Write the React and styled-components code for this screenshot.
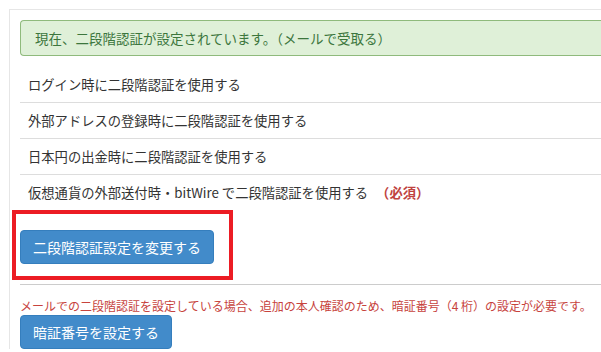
import styled, { createGlobalStyle } from 'styled-components';

const GlobalStyle = createGlobalStyle`
    html, body {
        margin: 0;
        padding: 0;
        background: #fff;
        overflow: hidden;
    }
    body {
        font-family: "Noto Sans CJK JP", "Noto Sans", sans-serif;
        color: #333;
    }
`;

const Page = styled.div`
    padding: 9px 0 0 9px;
`;

const Panel = styled.section`
    border-top: 1px solid #e6e6e6;
    border-left: 1px solid #e6e6e6;
    padding: 10px 0 0 10px;
`;

// the alert runs on past the right edge of the window, so no right border is seen
const Alert = styled.div`
    display: flex;
    align-items: center;
    height: 36px;
    box-sizing: border-box;
    padding: 0 14px;
    font-size: 13.5px;
    color: #3c763d;
    background-color: #dff0d8;
    border: 1px solid #8fba7c;
    border-right: none;
    border-radius: 4px 0 0 4px;
`;

const List = styled.ul`
    list-style: none;
    margin: 10px 0 0;
    padding: 0;
`;

const Row = styled.li`
    display: flex;
    align-items: center;
    height: 36px;
    box-sizing: border-box;
    padding-left: 8px;
    font-size: 13.3px;
    color: #333;
    border-top: ${p => (p.$first ? 'none' : '1px solid #dddddd')};
`;

const Required = styled.span`
    margin-left: 8px;
    color: #c0433f;
    font-weight: bold;
`;

const Action = styled.div`
    position: relative;
    padding: 20px 0 20px;
    border-bottom: 1px solid #cccccc;
`;

const Highlight = styled.div`
    position: absolute;
    left: -8px;
    top: 0;
    width: 221px;
    height: 70px;
    box-sizing: border-box;
    border: 4px solid #ec1c24;
    pointer-events: none;
`;

const Button = styled.button`
    height: 34px;
    padding: 0 12px;
    font-family: inherit;
    font-size: 14px;
    color: #fff;
    background-color: #428bca;
    border: 1px solid #357ebd;
    border-radius: 4px;
    cursor: pointer;
`;

const Note = styled.p`
    margin: 12px 0 0;
    font-size: 12px;
    line-height: 18px;
    color: #c7433d;
    white-space: nowrap;
`;

const App = () => {
    return (
        <Page>
            <GlobalStyle />
            <Panel>
                <Alert>現在、二段階認証が設定されています。（メールで受取る）</Alert>
                <List>
                    <Row $first>ログイン時に二段階認証を使用する</Row>
                    <Row>外部アドレスの登録時に二段階認証を使用する</Row>
                    <Row>日本円の出金時に二段階認証を使用する</Row>
                    <Row>
                        仮想通貨の外部送付時・bitWire で二段階認証を使用する
                        <Required>（必須）</Required>
                    </Row>
                </List>
                <Action>
                    <Button>二段階認証設定を変更する</Button>
                    <Highlight />
                </Action>
                <Note>メールでの二段階認証を設定している場合、追加の本人確認のため、暗証番号（4 桁）の設定が必要です。</Note>
                <Button>暗証番号を設定する</Button>
            </Panel>
        </Page>
    );
};

export default App;
